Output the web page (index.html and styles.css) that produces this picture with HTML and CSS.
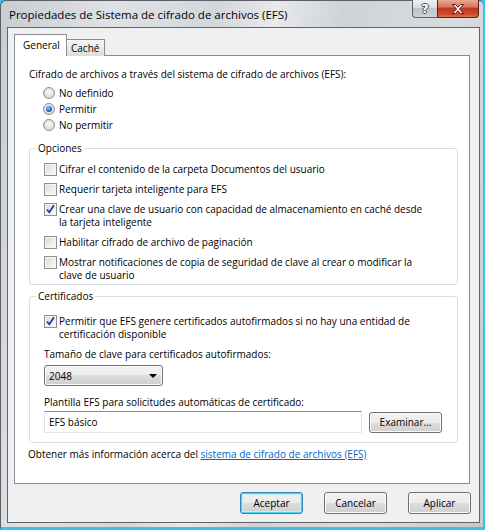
FILE: index.html
```html
<!DOCTYPE html>
<html lang="es">
<head>
<meta charset="utf-8">
<title>Propiedades de Sistema de cifrado de archivos (EFS)</title>
<link rel="stylesheet" href="styles.css">
</head>
<body>
<div class="window">
  <div class="titlebar">
    <span class="title">Propiedades de Sistema de cifrado de archivos (EFS)</span>
    <div class="caption-btns">
      <span class="cbtn help">?</span>
      <span class="cbtn close">
        <svg width="16" height="12" viewBox="0 0 16 12"><path d="M2.5 1.5h3l2.5 2.8 2.5-2.8h3l-4 4.5 4 4.5h-3L8 7.7l-2.5 2.8h-3l4-4.5z" fill="#fff" stroke="#5a1f12" stroke-width="1" stroke-linejoin="round"/></svg>
      </span>
    </div>
  </div>
  <div class="client">
    <div class="tabs">
      <span class="tab active">General</span>
      <span class="tab">Caché</span>
    </div>
    <div class="panel">
      <div class="line">Cifrado de archivos a través del sistema de cifrado de archivos (EFS):</div>
      <div class="radios">
        <div class="radio-row"><span class="radio"></span><span>No definido</span></div>
        <div class="radio-row"><span class="radio on"></span><span>Permitir</span></div>
        <div class="radio-row"><span class="radio"></span><span>No permitir</span></div>
      </div>
      <div class="group g1">
        <span class="legend">Opciones</span>
        <div class="chk-row"><span class="chk"></span><span class="chk-text">Cifrar el contenido de la carpeta Documentos del usuario</span></div>
        <div class="chk-row"><span class="chk"></span><span class="chk-text">Requerir tarjeta inteligente para EFS</span></div>
        <div class="chk-row"><span class="chk on"><svg width="11" height="11" viewBox="0 0 11 11"><path d="M2 5.5l2.3 2.8 4.7-7" fill="none" stroke="#1e3f9a" stroke-width="1.8"/></svg></span><span class="chk-text">Crear una clave de usuario con capacidad de almacenamiento en caché desde la tarjeta inteligente</span></div>
        <div class="chk-row"><span class="chk"></span><span class="chk-text">Habilitar cifrado de archivo de paginación</span></div>
        <div class="chk-row"><span class="chk"></span><span class="chk-text">Mostrar notificaciones de copia de seguridad de clave al crear o modificar la clave de usuario</span></div>
      </div>
      <div class="group g2">
        <span class="legend">Certificados</span>
        <div class="chk-row"><span class="chk on"><svg width="11" height="11" viewBox="0 0 11 11"><path d="M2 5.5l2.3 2.8 4.7-7" fill="none" stroke="#1e3f9a" stroke-width="1.8"/></svg></span><span class="chk-text">Permitir que EFS genere certificados autofirmados si no hay una entidad de certificación disponible</span></div>
        <div class="line l-size">Tamaño de clave para certificados autofirmados:</div>
        <div class="combo"><span>2048</span><span class="arrow"></span></div>
        <div class="line l-tpl">Plantilla EFS para solicitudes automáticas de certificado:</div>
        <div class="tpl-row">
          <div class="input">EFS básico</div>
          <span class="btn browse">Examinar...</span>
        </div>
      </div>
      <div class="line more">Obtener más información acerca del <a href="#" class="link">sistema de cifrado de archivos (EFS)</a></div>
    </div>
    <div class="actions">
      <span class="btn default">Aceptar</span>
      <span class="btn">Cancelar</span>
      <span class="btn">Aplicar</span>
    </div>
  </div>
</div>
</body>
</html>
```
FILE: styles.css
```css
* { box-sizing: border-box; }
html, body { margin: 0; padding: 0; }
body {
  width: 485px;
  height: 530px;
  overflow: hidden;
  background: #3cc0ea;
  font-family: "Open Sans", "Noto Sans", sans-serif;
  font-size: 10px;
  color: #000;
}
.window {
  width: 485px;
  height: 530px;
  display: flex;
  flex-direction: column;
  border-top: 1px solid #5c6065;
  border-left: 1px solid #5c6065;
  border-right: 2px solid #3cc0ea;
  border-bottom: 3px solid #3cc0ea;
  border-radius: 6px 6px 0 0;
  background: linear-gradient(100deg, #c8cdd2 0%, #dfe2e5 20%, #d3d7db 38%, #e8eaec 48%, #cfd3d7 60%, #d9dcdf 80%, #c4c9ce 100%);
  padding: 0 3px 4px 6px;
}
.titlebar {
  height: 26px;
  display: flex;
  align-items: flex-start;
  flex: none;
}
.title {
  margin: 6px 0 0 2px;
  font-size: 11.5px;
  line-height: 15px;
  color: #000;
}
.caption-btns {
  margin-left: auto;
  margin-right: 1px;
  display: flex;
  margin-top: -1px;
}
.cbtn {
  height: 18px;
  display: flex;
  align-items: center;
  justify-content: center;
  border: 1px solid #5e6268;
  border-top: none;
}
.help {
  width: 25px;
  border-right: none;
  border-radius: 0 0 0 4px;
  background: linear-gradient(#eef0f2 0%, #d9dde1 45%, #bfc4ca 50%, #cdd2d7 100%);
  color: #fff;
  font-family: "DejaVu Sans", sans-serif;
  font-weight: bold;
  font-size: 13px;
  text-shadow: 1px 0 0 #4a4f55, -1px 0 0 #4a4f55, 0 1px 0 #4a4f55, 0 -1px 0 #4a4f55;
}
.close {
  width: 42px;
  border-color: #5a2014;
  border-radius: 0 0 4px 0;
  background: linear-gradient(#eaa996 0%, #d8765e 40%, #c0391c 50%, #cc4d2a 85%, #e0784f 100%);
}
.client {
  flex: 1;
  border: 1px solid #61656b;
  background: #f0f0f0;
  padding: 7px 8px 6px 6px;
  display: flex;
  flex-direction: column;
}
.tabs {
  display: flex;
  align-items: flex-end;
  height: 21px;
  position: relative;
  z-index: 1;
  margin-bottom: -1px;
}
.tab {
  height: 17px;
  line-height: 15px;
  padding: 0 4px;
  border: 1px solid #898c95;
  border-bottom: none;
  background: linear-gradient(#f6f6f6, #dcdcdc);
  margin-left: -1px;
}
.tab.active {
  height: 22px;
  width: 53px;
  padding: 3px 0 0 8px;
  background: #fff;
  margin-left: 0;
  margin-right: 0;
  z-index: 2;
}
.tab:not(.active) {
  width: 39px;
  padding-left: 4px;
  padding-top: 1px;
}
.panel {
  height: 429px;
  border: 1px solid #898c95;
  background: #fff;
  margin-right: 1px;
  padding: 12px 11px 0 14px;
  flex: none;
}
.line {
  line-height: 13px;
  white-space: nowrap;
}
.radios {
  margin-top: 4px;
}
.radio-row {
  display: flex;
  align-items: center;
  height: 16px;
  padding-left: 14px;
}
.radio {
  width: 12px;
  height: 12px;
  border-radius: 50%;
  border: 1px solid #8e8f8f;
  background: radial-gradient(circle at 50% 40%, #f7f7f7 0%, #e2e2e2 55%, #c8c8c8 100%);
  margin-right: 4px;
  flex: none;
  display: flex;
  align-items: center;
  justify-content: center;
}
.radio.on::after {
  content: "";
  width: 6px;
  height: 6px;
  border-radius: 50%;
  background: radial-gradient(circle at 40% 35%, #8fd0ff 0%, #2a6fc4 50%, #0d3e8a 100%);
}
.group {
  position: relative;
  border: 1px solid #d5dfe5;
  border-radius: 3px;
  padding: 0 27px 0 14px;
}
.g1 {
  margin-top: 15px;
  padding-top: 14px;
  padding-bottom: 2px;
}
.g2 {
  margin-top: 11px;
  padding-top: 18px;
  padding-bottom: 9px;
  padding-right: 15px;
}
.legend {
  position: absolute;
  top: -7px;
  left: 6px;
  padding: 0 2px;
  background: #fff;
  line-height: 13px;
}
.chk-row {
  display: flex;
  align-items: flex-start;
  margin-top: 7px;
  line-height: 13px;
}
.g1 .chk-row:first-of-type, .g2 .chk-row:first-of-type { margin-top: 0; }
.g2 .chk-text { max-width: 370px; }
.chk {
  width: 13px;
  height: 13px;
  flex: none;
  border: 1px solid #8f8f8f;
  background: linear-gradient(135deg, #d8d8d8 0%, #eeeeee 60%, #fbfbfb 100%);
  box-shadow: inset 0 0 0 1px #f4f4f4;
  margin-right: 2px;
  display: flex;
  align-items: center;
  justify-content: center;
}
.chk-text { white-space: normal; }
.l-size { margin-top: 7px; }
.combo {
  margin-top: 4px;
  width: 119px;
  height: 21px;
  border: 1px solid #707070;
  border-radius: 3px;
  background: linear-gradient(#f3f3f3 0%, #ebebeb 50%, #dddddd 50%, #cfcfcf 100%);
  box-shadow: inset 0 0 0 1px #fcfcfc;
  display: flex;
  align-items: center;
  padding-left: 4px;
}
.arrow {
  margin-left: auto;
  margin-right: 5px;
  width: 0;
  height: 0;
  border-left: 4px solid transparent;
  border-right: 4px solid transparent;
  border-top: 4px solid #000;
}
.l-tpl { margin-top: 10px; }
.tpl-row {
  margin-top: 2px;
  display: flex;
  align-items: center;
}
.input {
  width: 318px;
  height: 22px;
  border: 1px solid #abadb3;
  border-top-color: #8b8e96;
  border-left-color: #e2e3ea;
  border-right-color: #dbdfe6;
  border-bottom-color: #e3e9ef;
  background: #fff;
  padding: 3px 0 0 4px;
  line-height: 14px;
  flex: none;
}
.btn {
  height: 21px;
  border: 1px solid #707070;
  border-radius: 3px;
  background: linear-gradient(#f2f2f2 0%, #ebebeb 50%, #dddddd 50%, #cfcfcf 100%);
  box-shadow: inset 0 0 0 1px #fbfbfb;
  display: flex;
  align-items: center;
  justify-content: center;
  line-height: 13px;
}
.browse {
  width: 73px;
  margin-left: 7px;
  flex: none;
}
.more {
  margin-top: 5px;
  margin-left: -1px;
}
.link {
  color: #0066cc;
  text-decoration: underline;
}
.actions {
  margin-top: 8px;
  display: flex;
  justify-content: flex-end;
  gap: 21px;
}
.actions .btn {
  width: 63px;
  height: 22px;
}
.actions .btn.default {
  border-color: #3c7fb1;
  box-shadow: inset 0 0 0 1px #48d8fb, inset 0 0 0 2px #bfeefc;
}
```
